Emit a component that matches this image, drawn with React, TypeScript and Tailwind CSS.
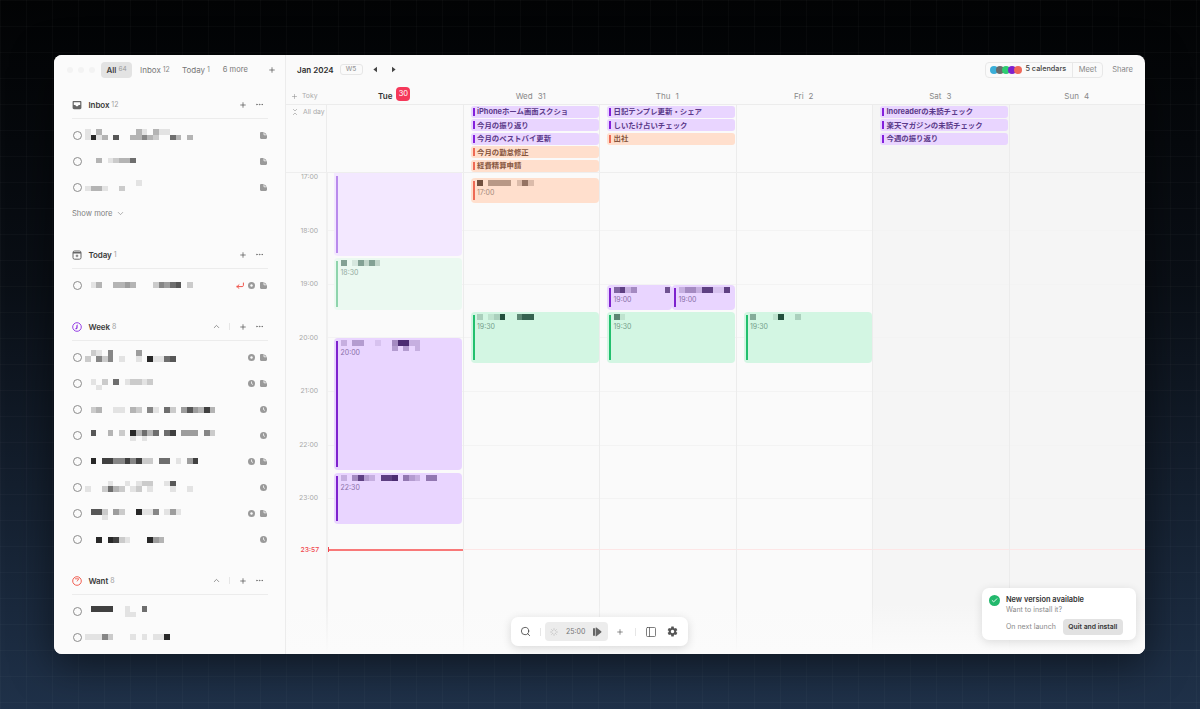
import React from "react";
import { Search, Plus, PanelLeft, ChevronDown, ChevronUp, Ellipsis, Loader, ChevronsDownUp, Check } from "lucide-react";
import { IoSettingsSharp } from "react-icons/io5";

const CELL = 5.67;

function Mosaic({ rows, color = "#111", className = "" }: { rows: string[]; color?: string; className?: string }) {
  const width = Math.max(...rows.map((r) => r.length)) * CELL;
  return (
    <svg width={width} height={rows.length * CELL} className={className} shapeRendering="crispEdges">
      {rows.map((r, ry) =>
        r.split("").map((c, cx) =>
          c === "." ? null : (
            <rect key={`${ry}-${cx}`} x={cx * CELL} y={ry * CELL} width={CELL} height={CELL} fill={color} opacity={Number(c) / 10} />
          )
        )
      )}
    </svg>
  );
}

function RowMosaic({ rows, y }: { rows: string[]; y: number }) {
  return (
    <svg width={150} height={26} className="shrink-0" shapeRendering="crispEdges">
      {rows.map((r, ry) =>
        r.split("").map((c, cx) =>
          c === "." ? null : (
            <rect key={`${ry}-${cx}`} x={cx * CELL} y={13 + y + ry * CELL} width={CELL} height={CELL} fill="#111" opacity={Number(c) / 10} />
          )
        )
      )}
    </svg>
  );
}

const DocIcon = () => (
  <svg width="7" height="7" viewBox="0 0 7 7" className="shrink-0">
    <path d="M1.2 0H3.6V2.2C3.6 2.8 4 3.2 4.6 3.2H7V5.8C7 6.5 6.5 7 5.8 7H1.2C.5 7 0 6.5 0 5.8V1.2C0 .5.5 0 1.2 0Z" fill="#9a9a9a" />
    <path d="M4.4 0.2L6.8 2.5H4.4Z" fill="#9a9a9a" />
  </svg>
);
const TargetIcon = () => (
  <svg width="7" height="7" viewBox="0 0 7 7" className="shrink-0">
    <circle cx="3.5" cy="3.5" r="3.5" fill="#9a9a9a" />
    <circle cx="3.5" cy="3.5" r="1.2" fill="#fbfbfb" />
  </svg>
);
const ClockIcon = () => (
  <svg width="7" height="7" viewBox="0 0 7 7" className="shrink-0">
    <circle cx="3.5" cy="3.5" r="3.5" fill="#9a9a9a" />
    <path d="M3.5 1.5V3.6L5 4.5" stroke="#fbfbfb" strokeWidth="0.8" fill="none" />
  </svg>
);
const ReturnIcon = () => (
  <svg width="8" height="7" viewBox="0 0 8 7" className="shrink-0">
    <path d="M7.4 1V3.4C7.4 4.1 6.9 4.6 6.2 4.6H1M1 4.6L3 2.8M1 4.6L3 6.4" stroke="#f0534a" strokeWidth="1" fill="none" strokeLinecap="round" />
  </svg>
);

const InboxIcon = () => (
  <svg width="10" height="10" viewBox="0 0 10 10" className="shrink-0">
    <path d="M1.6 1H8.4C9 1 9.4 1.4 9.4 2V7.8C9.4 8.6 8.8 9.2 8 9.2H2C1.2 9.2 .6 8.6 .6 7.8V2C.6 1.4 1 1 1.6 1Z" fill="#666" />
    <path d="M1.8 2.2H8.2V5H6.6C6.4 5.9 5.8 6.3 5 6.3C4.2 6.3 3.6 5.9 3.4 5H1.8Z" fill="#fbfbfb" />
  </svg>
);
const TodayIcon = () => (
  <svg width="10" height="10" viewBox="0 0 10 10" fill="none" className="shrink-0">
    <rect x="1" y="1" width="8" height="8.2" rx="1.6" stroke="#666" strokeWidth="1" />
    <path d="M1 2.8H9" stroke="#666" strokeWidth="1.6" />
    <path d="M5 4.6V7.2M3.7 5.9H6.3" stroke="#666" strokeWidth="0.9" />
  </svg>
);
const WeekIcon = () => (
  <svg width="10" height="10" viewBox="0 0 10 10" fill="none" className="shrink-0">
    <circle cx="5" cy="5" r="4.3" stroke="#8b2be2" strokeWidth="0.9" />
    <path d="M5.6 2.3V5.4C5.6 6.6 4.6 7.4 3.4 7.2L3.4 6.2C4 6.2 4.4 5.9 4.4 5.3L4.4 3.4Z" fill="#8b2be2" />
  </svg>
);
const WantIcon = () => (
  <svg width="10" height="10" viewBox="0 0 10 10" fill="none" className="shrink-0">
    <circle cx="5" cy="5" r="4.3" stroke="#ef4e3f" strokeWidth="0.9" />
    <path d="M3 2.8H6.8L5 5.4" stroke="#ef4e3f" strokeWidth="0.8" />
  </svg>
);

type Meta = "t" | "c" | "d" | "r";
function TaskRow({ rows, y, meta }: { rows: string[]; y: number; meta: (Meta | null)[] }) {
  return (
    <div className="flex h-[26px] items-center">
      <span className="ml-[1px] h-[9px] w-[9px] shrink-0 rounded-full border border-[#8c8c8c]" />
      <span className="ml-[3px] flex-1 overflow-hidden">
        <RowMosaic rows={rows} y={y} />
      </span>
      <span className="mr-[1.5px] flex items-center gap-[4.5px]">
        {meta.map((m, i) =>
          m === "t" ? <TargetIcon key={i} /> : m === "c" ? <ClockIcon key={i} /> : m === "d" ? <DocIcon key={i} /> : m === "r" ? <ReturnIcon key={i} /> : null
        )}
      </span>
    </div>
  );
}

function SectionHead({ icon, name, count, collapse }: { icon: React.ReactNode; name: string; count: number; collapse?: boolean }) {
  return (
    <div className="flex h-[28px] items-center border-b border-[#ececec] pt-[0.5px]">
      {icon}
      <span className="ml-[6.5px] text-[8px] font-semibold tracking-[-0.1px] text-[#3a3a3a]">{name}</span>
      <span className="ml-[2px] text-[7px] text-[#a0a0a0]">{count}</span>
      <span className="flex-1" />
      {collapse && (
        <>
          <ChevronUp size={9} strokeWidth={1.8} className="text-[#666]" />
          <span className="ml-[8px] mr-[9px] h-[7px] w-px bg-[#e6e6e6]" />
        </>
      )}
      <Plus size={8} strokeWidth={2.2} className="text-[#555]" />
      <Ellipsis size={9} strokeWidth={1.8} className="ml-[8px] mr-[4px] text-[#666]" />
    </div>
  );
}

const Sidebar = () => (
  <aside className="flex w-[232px] shrink-0 flex-col overflow-hidden border-r border-[#ececec] bg-[#fbfbfb] pl-[18px] pr-[17px]">
    <div className="-ml-[5px] -mr-[8px] mb-[6px] flex h-[30px] shrink-0 items-center text-[8px]">
      <span className="h-[6px] w-[6px] rounded-full bg-[#f3f3f3]" />
      <span className="ml-[5px] h-[6px] w-[6px] rounded-full bg-[#f3f3f3]" />
      <span className="ml-[5px] h-[6px] w-[6px] rounded-full bg-[#f3f3f3]" />
      <span className="ml-[6px] flex h-[16px] w-[31px] items-center justify-center gap-[2px] rounded-[4px] bg-[#e3e3e3]">
        <b className="font-semibold text-[#444]">All</b>
        <span className="text-[6.5px] text-[#999]">64</span>
      </span>
      <span className="ml-[8px] text-[#777]">Inbox</span>
      <span className="ml-[2px] text-[7px] text-[#888]">12</span>
      <span className="ml-[12px] text-[#777]">Today</span>
      <span className="ml-[2px] text-[7px] text-[#888]">1</span>
      <span className="ml-[13px] text-[7.5px] text-[#777]">6 more</span>
      <span className="flex-1" />
      <Plus size={8} strokeWidth={2.2} className="text-[#555]" />
    </div>

    <SectionHead icon={<InboxIcon />} name="Inbox" count={12} />
    <div className="mt-[3px] flex flex-col">
      <TaskRow y={-6} rows={["1.3......31.311", "1913.7..33532..63.3"]} meta={["d"]} />
      <TaskRow y={-3.5} rows={["..3.12336"]} meta={["d"]} />
      <TaskRow y={-7} rows={[".........1", "1331..2"]} meta={["d"]} />
      <div className="flex h-[26px] items-center gap-[3px] pt-[1px] text-[7.6px] text-[#808080]">
        Show more
        <ChevronDown size={9} strokeWidth={1.6} />
      </div>
    </div>

    <div className="mt-[15px]">
      <SectionHead icon={<TodayIcon />} name="Today" count={1} />
      <div className="mt-[3px]">
        <TaskRow y={-2.7} rows={[".13..3343...25467.2"]} meta={["r", "t", "d"]} />
      </div>
    </div>

    <div className="mt-[15px]">
      <SectionHead icon={<WeekIcon />} name="Week" count={8} collapse />
      <div className="mt-[3px] flex flex-col">
        <TaskRow y={-6.7} rows={[".21.5....4", "2.525.1..1.91167"]} meta={["t", "d"]} />
        <TaskRow y={-4} rows={[".1.2.6.12212", "..1"]} meta={["c", "d"]} />
        <TaskRow y={-2} rows={[".23..11.32.51.62.474383"]} meta={["c"]} />
        <TaskRow y={-5} rows={[".7..3.2.93636.68.444.52", "........1.1"]} meta={["c"]} />
        <TaskRow y={-3} rows={[".9.885585822.66.1.48"]} meta={["c", "d"]} />
        <TaskRow y={-6.4} rows={["....1..1.122..17", "1..2632.12.1...1..1"]} meta={["c"]} />
        <TaskRow y={-4} rows={[".772.42..9115.141", "...1"]} meta={["t", "d"]} />
        <TaskRow y={-2} rows={["..9.9821...943"]} meta={["c"]} />
      </div>
    </div>

    <div className="mt-[15px]">
      <SectionHead icon={<WantIcon />} name="Want" count={8} collapse />
      <div className="mt-[3px] flex flex-col">
        <TaskRow y={-5} rows={[".8888..1..6", ".......11"]} meta={[]} />
        <TaskRow y={-3} rows={["11152...1.1.119"]} meta={[]} />
      </div>
    </div>
  </aside>
);

const ArrowLeft = () => (
  <svg width="6" height="7" viewBox="0 0 6 7"><path d="M5 .8V6.2L1.4 3.5Z" fill="#444" /></svg>
);
const ArrowRight = () => (
  <svg width="6" height="7" viewBox="0 0 6 7"><path d="M1 .8V6.2L4.6 3.5Z" fill="#444" /></svg>
);

const CalTop = () => (
  <div className="flex h-[33px] shrink-0 items-center pb-[4px] pl-[11px] pr-[12px]">
    <span className="text-[8px] font-semibold text-[#2e2e2e]">Jan 2024</span>
    <span className="ml-[6px] flex h-[11px] w-[23px] items-center justify-center rounded-[3px] border border-[#e6e6e6] text-[6.5px] font-medium text-[#999]">W5</span>
    <span className="ml-[9px]"><ArrowLeft /></span>
    <span className="ml-[13px]"><ArrowRight /></span>
    <span className="flex-1" />
    <div className="flex h-[16px] items-center rounded-[4px] border border-[#e8e8e8] pl-[4px] text-[7.5px]">
      <span className="flex">
        <span className="h-[8px] w-[8px] rounded-full bg-[#3aaed8]" />
        <span className="-ml-[2px] h-[8px] w-[8px] rounded-full bg-[#6b6b6b]" />
        <span className="-ml-[2px] h-[8px] w-[8px] rounded-full bg-[#2ecc71]" />
        <span className="-ml-[2px] h-[8px] w-[8px] rounded-full bg-[#7e22ce]" />
        <span className="-ml-[2px] h-[8px] w-[8px] rounded-full bg-[#f0695a]" />
      </span>
      <span className="ml-[3.5px] text-[7.3px] font-medium text-[#444]">5 calendars</span>
      <span className="ml-[6px] h-full w-px bg-[#e8e8e8]" />
      <span className="px-[5.5px] text-[#888]">Meet</span>
    </div>
    <span className="ml-[9px] text-[7.6px] text-[#888]">Share</span>
  </div>
);

const days = [
  { label: "Tue", num: "30", today: true },
  { label: "Wed", num: "31" },
  { label: "Thu", num: "1" },
  { label: "Fri", num: "2" },
  { label: "Sat", num: "3", weekend: true },
  { label: "Sun", num: "4", weekend: true },
] as { label: string; num: string; today?: boolean; weekend?: boolean }[];

const DayHead = () => (
  <div className="grid h-[17px] shrink-0 grid-cols-[40px_repeat(6,1fr)] border-b border-[#ececec]">
    <div className="flex items-center gap-[4px] pl-[5px] text-[6.8px] text-[#aaa]">
      <Plus size={7} strokeWidth={1.8} className="text-[#888]" />
      <span>Toky</span>
    </div>
    {days.map((d) => (
      <div key={d.label} className="flex items-center justify-center gap-[4px] pb-[1px] text-[8px]">
        {d.today ? (
          <>
            <span className="font-semibold text-[#333]">{d.label}</span>
            <span className="-mt-[3px] flex h-[14px] w-[14px] items-center justify-center rounded-[4px] bg-[#f5385a] text-[7.5px] text-white">{d.num}</span>
          </>
        ) : (
          <>
            <span className="text-[#888]">{d.label}</span>
            <span className="ml-[1px] text-[#888]">{d.num}</span>
          </>
        )}
      </div>
    ))}
  </div>
);

function Chip({ text, peach }: { text: string; peach?: boolean }) {
  return (
    <div className={`flex h-[12px] items-center gap-[2.5px] rounded-[3px] pl-[2px] ${peach ? "bg-[#ffdfcd]" : "bg-[#e9d5ff]"}`}>
      <span className={`h-[8px] w-[2px] shrink-0 ${peach ? "bg-[#ee6a55]" : "bg-[#8420dd]"}`} />
      <span className={`whitespace-nowrap font-['Inter','Noto_Sans_CJK_JP',sans-serif] text-[7.4px] font-bold ${peach ? "text-[#87563f]" : "text-[#5b3a8a]"}`}>{text}</span>
    </div>
  );
}

const allDay: { text: string; peach?: boolean }[][] = [
  [],
  [
    { text: "iPhoneホーム画面スクショ" },
    { text: "今月の振り返り" },
    { text: "今月のベストバイ更新" },
    { text: "今月の勤怠修正", peach: true },
    { text: "経費精算申請", peach: true },
  ],
  [{ text: "日記テンプレ更新・シェア" }, { text: "しいたけ占いチェック" }, { text: "出社", peach: true }],
  [],
  [{ text: "Inoreaderの未読チェック" }, { text: "楽天マガジンの未読チェック" }, { text: "今週の振り返り" }],
  [],
];

const AllDayRow = () => (
  <div className="grid h-[68px] shrink-0 grid-cols-[40px_repeat(6,1fr)] border-b border-[#eeeeee]">
    <div className="flex items-start gap-[4px] whitespace-nowrap pl-[5px] pt-[2px] text-[6.8px] text-[#aaa]">
      <ChevronsDownUp size={8} strokeWidth={1.6} className="mt-[0.5px] shrink-0 text-[#888]" />
      <span>All day</span>
    </div>
    {allDay.map((chips, i) => (
      <div key={i} className={`flex flex-col gap-[1.4px] border-l border-[#ececec] pl-[7px] pr-[0.5px] pt-[1px] ${days[i].weekend ? "bg-[#f5f5f5]" : ""}`}>
        {chips.map((c) => (
          <Chip key={c.text} text={c.text} peach={c.peach} />
        ))}
      </div>
    ))}
  </div>
);

type Kind = "purple" | "purpleLight" | "green" | "greenLight" | "peach";
type Ev = { top: number; h: number; kind: Kind; time?: string; rows?: string[]; left?: number; right?: number; flat?: boolean };

const kindStyle: Record<Kind, { bg: string; bar: string; text: string; mosaic: string }> = {
  purple: { bg: "bg-[#e9d5ff]", bar: "bg-[#7e22ce]", text: "text-[#8a6fa8]", mosaic: "#3b1a63" },
  purpleLight: { bg: "bg-[#f3e8ff]", bar: "bg-[#b98aec]", text: "text-[#9a88ad]", mosaic: "#3b1a63" },
  green: { bg: "bg-[#d3f6e3]", bar: "bg-[#22c06e]", text: "text-[#74a08b]", mosaic: "#0f3d2a" },
  greenLight: { bg: "bg-[#ebf9f1]", bar: "bg-[#8ed4ac]", text: "text-[#93ab9f]", mosaic: "#1c4a37" },
  peach: { bg: "bg-[#ffdfcd]", bar: "bg-[#ee6a55]", text: "text-[#a68a7b]", mosaic: "#4d2c1c" },
};

const events: Ev[][] = [
  [
    { top: 0, h: 83, kind: "purpleLight", flat: true, left: 6 },
    { top: 85, h: 52, kind: "greenLight", time: "18:30", rows: ["5.15252"], left: 6 },
    { top: 165, h: 132, kind: "purple", time: "20:00", rows: ["2.33..1..49922", ".........3.3.2"], left: 6 },
    { top: 300, h: 51, kind: "purple", time: "22:30", rows: ["2.4832.889.532.55"], left: 6 },
  ],
  [
    { top: 5, h: 25, kind: "peach", time: "17:00", rows: ["8.4444.262"] },
    { top: 139, h: 51, kind: "green", time: "19:30", rows: ["2.129..688"] },
  ],
  [
    { top: 112, h: 25, kind: "purple", time: "19:00", rows: ["6824.....7"], right: 64 },
    { top: 112, h: 25, kind: "purple", time: "19:00", rows: ["244288118"], left: 72 },
    { top: 139, h: 51, kind: "green", time: "19:30", rows: ["61"] },
  ],
  [{ top: 139, h: 51, kind: "green", time: "19:30", rows: ["4...19..2"] }],
  [],
  [],
];

function EventCard({ e }: { e: Ev }) {
  const s = kindStyle[e.kind];
  return (
    <div
      className={`absolute flex gap-[2.5px] overflow-hidden py-[3px] pl-[2px] ${s.bg} ${e.flat ? "rounded-b-[4px]" : "rounded-[4px]"}`}
      style={{ top: e.top, height: e.h, left: e.left ?? 7, right: e.right ?? 0.5 }}
    >
      <span className={`w-[2px] shrink-0 ${s.bar}`} />
      <div className="flex flex-col">
        {e.rows && (
          <div className="-mt-[1px] h-[7px]">
            <Mosaic rows={e.rows} color={s.mosaic} className="block" />
          </div>
        )}
        {e.time && <span className={`mt-[1px] text-[7px] leading-[10px] ${s.text}`}>{e.time}</span>}
      </div>
    </div>
  );
}

const HOURS = ["17:00", "18:00", "19:00", "20:00", "21:00", "22:00", "23:00"];

const HourGrid = () => (
  <div className="relative min-h-0 flex-1">
    <div className="grid h-full grid-cols-[40px_repeat(6,1fr)]">
      <div className="relative flex flex-col pt-[3.6px]">
        {HOURS.map((h) => (
          <div key={h} className="h-[53.6px] shrink-0 pr-[8px] text-right text-[6.8px] leading-none text-[#a8a8a8]">
            <span className="-mt-[2.7px] block">{h}</span>
          </div>
        ))}
      </div>
      {days.map((d, i) => (
        <div key={d.label} className={`relative border-l border-[#ececec] ${i === 0 ? "border-l-2 border-l-[#f0f0f0]" : ""} ${d.weekend ? "bg-[#f5f5f5]" : ""}`}>
          <div className="flex flex-col pt-[3.6px]">
            {HOURS.map((h, j) => (
              <div key={h} className={`h-[53.6px] shrink-0 ${j === 0 ? "" : "border-t border-[#f3f3f3]"}`} />
            ))}
          </div>
          {events[i].map((e, k) => (
            <EventCard key={k} e={e} />
          ))}
          <div className={`absolute right-0 top-[376px] ${i === 0 ? "left-[1px] h-[1.5px] bg-[#f87878]" : "left-0 h-px bg-[#fde6e6]"}`} />
          {i === 0 && <div className="absolute -left-[0.5px] top-[374px] h-[5px] w-[1.5px] bg-[#f0484f]" />}
        </div>
      ))}
    </div>
    <span className="absolute left-[14.5px] top-[373.5px] text-[6.8px] font-medium leading-none text-[#f0484f]">23:57</span>
    <div className="absolute inset-x-0 bottom-0 h-[50px] bg-gradient-to-b from-transparent to-[#fbfbfb]" />
  </div>
);

const Toolbar = () => (
  <div className="absolute bottom-[8px] left-[457px] flex h-[29px] w-[177px] items-center rounded-[7px] bg-white pl-[9px] shadow-[0_2px_10px_rgba(0,0,0,0.14)]">
    <Search size={11} strokeWidth={1.8} className="text-[#444]" />
    <span className="ml-[9px] h-[8px] w-px bg-[#e6e6e6]" />
    <div className="ml-[4px] flex h-[19px] w-[63px] items-center rounded-[4px] bg-[#ececec] pl-[5px]">
      <Loader size={8} strokeWidth={1.6} className="text-[#aaa]" />
      <span className="ml-[8px] pt-[1px] text-[7px] text-[#777]">25:00</span>
      <svg width="9" height="10" viewBox="0 0 9 10" className="ml-[8px]">
        <path d="M0 1.2H2V8.8H0ZM2.6 1C2.6.5 3 .3 3.4.6L8.2 4.3C8.6 4.6 8.6 5.2 8.2 5.5L3.4 9.3C3 9.6 2.6 9.4 2.6 9Z" fill="#666" />
      </svg>
    </div>
    <Plus size={8} strokeWidth={2} className="ml-[8px] text-[#555]" />
    <span className="ml-[11px] h-[8px] w-px bg-[#e6e6e6]" />
    <PanelLeft size={12} strokeWidth={1.5} className="ml-[9px] text-[#555]" />
    <IoSettingsSharp size={11} className="ml-[10px] text-[#555]" />
  </div>
);

const Toast = () => (
  <div className="absolute bottom-[14px] right-[9px] flex h-[52px] w-[154px] flex-col rounded-[7px] bg-white pl-[7px] pt-[7px] shadow-[0_2px_10px_rgba(0,0,0,0.12)]">
    <div className="flex">
      <span className="flex h-[11px] w-[11px] items-center justify-center rounded-full bg-[#22b86c]">
        <Check size={7} strokeWidth={3} className="text-white" />
      </span>
      <div className="ml-[6px] flex flex-col">
        <span className="text-[7.4px] font-semibold leading-[10px] text-[#333]">New version available</span>
        <span className="text-[7px] leading-[10px] text-[#8a8a8a]">Want to install it?</span>
      </div>
    </div>
    <div className="mt-[4px] flex items-center pl-[17px]">
      <span className="text-[7px] text-[#888]">On next launch</span>
      <span className="ml-[7px] flex h-[16px] w-[60px] items-center justify-center rounded-[4px] bg-[#e2e2e2] text-[6.8px] font-semibold text-[#333]">Quit and install</span>
    </div>
  </div>
);

export default function App() {
  return (
    <div className="h-[709px] w-full overflow-hidden bg-[linear-gradient(rgba(255,255,255,0.025)_1px,transparent_1px),linear-gradient(90deg,rgba(255,255,255,0.025)_1px,transparent_1px),linear-gradient(180deg,#020304_0%,#0a0f16_40%,#1f3149_100%)] bg-[size:26px_26px,26px_26px,100%_100%] pl-[54px] pr-[55px] pt-[55px] font-['Inter','Noto_Sans_CJK_JP',sans-serif]">
      <div className="relative flex h-[599px] overflow-hidden rounded-[8px] bg-[#fafafa] shadow-[0_10px_40px_rgba(0,0,0,0.5)]">
        <Sidebar />
        <main className="flex min-w-0 flex-1 flex-col">
          <CalTop />
          <DayHead />
          <AllDayRow />
          <HourGrid />
        </main>
        <Toolbar />
        <Toast />
      </div>
    </div>
  );
}
